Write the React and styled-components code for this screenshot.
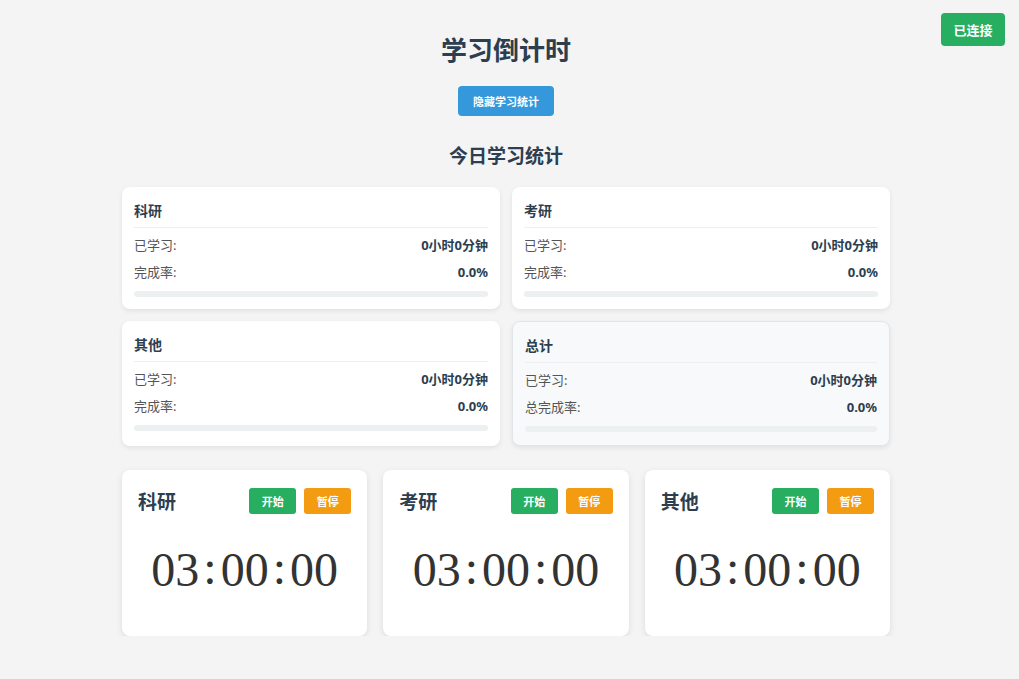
import styled, { createGlobalStyle } from "styled-components";

const GlobalStyle = createGlobalStyle`
  body {
    margin: 0;
    background: #f4f4f4;
    font-family: "Noto Sans", "Noto Sans CJK SC", sans-serif;
    color: #2c3e50;
  }
`;

const stats = [
  { name: "科研", studied: "0小时0分钟", rateLabel: "完成率:", rate: "0.0%" },
  { name: "考研", studied: "0小时0分钟", rateLabel: "完成率:", rate: "0.0%" },
  { name: "其他", studied: "0小时0分钟", rateLabel: "完成率:", rate: "0.0%" },
  { name: "总计", studied: "0小时0分钟", rateLabel: "总完成率:", rate: "0.0%", total: true },
];

const timers = ["科研", "考研", "其他"];

function App() {
  return (
    <Shell>
      <GlobalStyle />
      <Status>已连接</Status>
      <Page>
        <Title>学习倒计时</Title>
        <ToggleButton>隐藏学习统计</ToggleButton>
        <SectionTitle>今日学习统计</SectionTitle>
        <StatGrid>
          {stats.map((s) => (
            <StatCard key={s.name} $total={s.total}>
              <StatTitle>{s.name}</StatTitle>
              <StatRow>
                <span>已学习:</span>
                <strong>{s.studied}</strong>
              </StatRow>
              <StatRow>
                <span>{s.rateLabel}</span>
                <strong>{s.rate}</strong>
              </StatRow>
              <Progress>
                <ProgressFill style={{ width: "0%" }} />
              </Progress>
            </StatCard>
          ))}
        </StatGrid>
        <TimerGrid>
          {timers.map((t) => (
            <TimerCard key={t}>
              <TimerHead>
                <TimerName>{t}</TimerName>
                <Actions>
                  <SmallButton $color="#27ae60">开始</SmallButton>
                  <SmallButton $color="#f39c12">暂停</SmallButton>
                </Actions>
              </TimerHead>
              <Clock>
                03<Colon>:</Colon>00<Colon>:</Colon>00
              </Clock>
            </TimerCard>
          ))}
        </TimerGrid>
      </Page>
    </Shell>
  );
}

const Shell = styled.div`
  padding-right: 7px;
`;

const Status = styled.div`
  position: fixed;
  top: 13px;
  right: 14px;
  width: 64px;
  height: 33px;
  display: flex;
  align-items: center;
  justify-content: center;
  background: #27ae60;
  color: #fff;
  font-size: 13px;
  font-weight: bold;
  border-radius: 4px;
`;

const Page = styled.div`
  width: 768px;
  margin: 0 auto;
  padding-top: 31px;
  display: flex;
  flex-direction: column;
  align-items: center;
`;

const Title = styled.h1`
  margin: 0;
  font-size: 26px;
  line-height: 38px;
  font-weight: bold;
  color: #2c3e50;
`;

const ToggleButton = styled.button`
  margin-top: 17px;
  width: 96px;
  height: 30px;
  border: none;
  border-radius: 4px;
  background: #3498db;
  color: #fff;
  font-family: inherit;
  font-size: 11px;
  font-weight: bold;
`;

const SectionTitle = styled.h2`
  margin: 26px 0 0;
  font-size: 19px;
  line-height: 28px;
  font-weight: bold;
  color: #2c3e50;
`;

const StatGrid = styled.div`
  width: 100%;
  margin-top: 17px;
  display: grid;
  grid-template-columns: 1fr 1fr;
  gap: 12px;
`;

const StatCard = styled.div`
  background: ${(p) => (p.$total ? "#f8f9fa" : "#fff")};
  border: ${(p) => (p.$total ? "1px solid #e3e6e8" : "none")};
  border-radius: 8px;
  box-shadow: 0 2px 5px rgba(0, 0, 0, 0.08);
  padding: 13px 12px ${(p) => (p.$total ? "13px" : "12px")};
`;

const StatTitle = styled.div`
  font-size: 14px;
  font-weight: bold;
  line-height: 22px;
  padding-bottom: 5px;
  border-bottom: 1px solid #ecf0f1;
  margin-bottom: 4px;
`;

const StatRow = styled.div`
  display: flex;
  justify-content: space-between;
  font-size: 13px;
  line-height: 27px;
  color: #555;

  strong {
    color: #2c3e50;
    font-weight: bold;
  }
`;

const Progress = styled.div`
  margin-top: 5px;
  height: 6px;
  border-radius: 3px;
  background: #ecf0f1;
  overflow: hidden;
`;

const ProgressFill = styled.div`
  height: 100%;
  background: #27ae60;
`;

const TimerGrid = styled.div`
  width: 100%;
  margin-top: 24px;
  display: grid;
  grid-template-columns: repeat(3, 1fr);
  gap: 16px;
`;

const TimerCard = styled.div`
  background: #fff;
  border-radius: 8px;
  box-shadow: 0 2px 6px rgba(0, 0, 0, 0.1);
  padding: 17px 16px 0;
  height: 166px;
  box-sizing: border-box;
`;

const TimerHead = styled.div`
  display: flex;
  justify-content: space-between;
  align-items: center;
`;

const TimerName = styled.div`
  font-size: 19px;
  font-weight: bold;
  color: #2c3e50;
`;

const Actions = styled.div`
  display: flex;
  gap: 8px;
`;

const SmallButton = styled.button`
  width: 47px;
  height: 26px;
  border: none;
  border-radius: 3px;
  background: ${(p) => p.$color};
  color: #fff;
  font-family: inherit;
  font-size: 11px;
  font-weight: bold;
`;

const Clock = styled.div`
  margin-top: 27px;
  text-align: center;
  font-family: "Liberation Serif", serif;
  font-size: 48px;
  line-height: 55px;
  color: #333;
`;

const Colon = styled.span`
  margin: 0 4px;
  position: relative;
  top: -2px;
`;

export default App;
